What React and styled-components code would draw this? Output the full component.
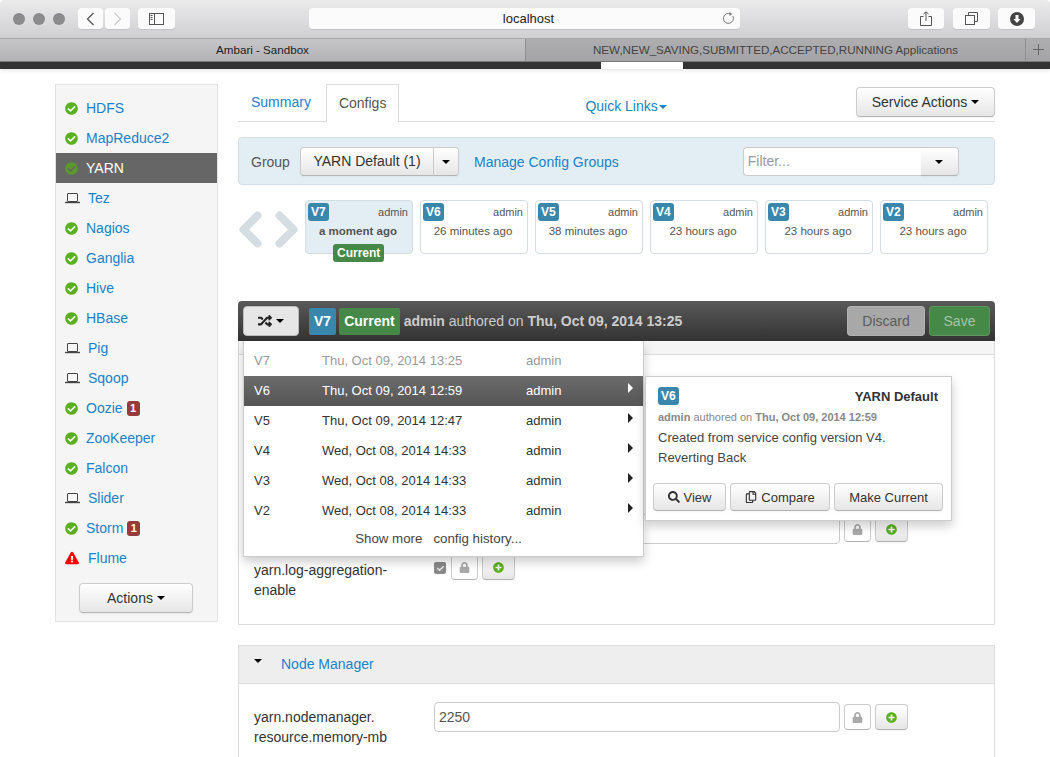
import React from "react";
import styled, { createGlobalStyle, css } from "styled-components";
import {
  FaCheckCircle,
  FaExclamationTriangle,
  FaRandom,
  FaSearch,
  FaRegCopy,
  FaLock,
  FaPlusCircle,
  FaCheck,
} from "react-icons/fa";

const GlobalStyle = createGlobalStyle`
  html, body { margin: 0; padding: 0; background: #fff; }
  body {
    font-family: "Liberation Sans", Arial, sans-serif;
    font-size: 14px;
    color: #333;
  }
  * { box-sizing: border-box; }
`;

const Screen = styled.div`
  width: 1050px;
  height: 757px;
  overflow: hidden;
  background: #fff;
`;

/* ---------- browser chrome ---------- */

const Toolbar = styled.div`
  height: 38px;
  display: flex;
  align-items: center;
  padding: 0 15px 0 13px;
  background: linear-gradient(#ecebec, #cfced0);
  border-radius: 4px 4px 0 0;
`;

const Light = styled.span`
  width: 12px;
  height: 12px;
  margin-right: 8px;
  border-radius: 50%;
  background: #8b8a8d;
`;

const ChromeBtn = styled.div`
  width: ${(p) => p.$w}px;
  height: 22px;
  margin-left: ${(p) => p.$ml || 0}px;
  display: flex;
  align-items: center;
  justify-content: center;
  background: #fbfbfb;
  border-radius: 4px;
  border-bottom: 1px solid #c2c1c3;
`;

const UrlBar = styled.div`
  width: 431px;
  height: 22px;
  margin-left: 134px;
  margin-right: 168px;
  padding-left: 8px;
  position: relative;
  display: flex;
  align-items: center;
  justify-content: center;
  font-size: 13px;
  color: #222;
  background: #fbfbfb;
  border-radius: 4px;
  border-bottom: 1px solid #c2c1c3;
  svg {
    position: absolute;
    right: 5px;
    top: 4px;
  }
`;

const TabStrip = styled.div`
  height: 24px;
  display: flex;
  border-top: 1px solid #a8a7a9;
  border-bottom: 1px solid #7f7e80;
  font-size: 11.6px;
`;

const BrowserTab = styled.div`
  flex: ${(p) => (p.$w ? `0 0 ${p.$w}px` : 1)};
  display: flex;
  align-items: center;
  justify-content: center;
  padding-bottom: 1px;
  color: ${(p) => (p.$active ? "#222" : "#444")};
  background: ${(p) =>
    p.$active
      ? "linear-gradient(#c6c5c7, #b3b2b4)"
      : "linear-gradient(#aeadaf, #a3a2a4)"};
  border-left: ${(p) => (p.$active ? "0" : "1px solid #8f8e90")};
`;

const AppBar = styled.div`
  height: 7px;
  display: flex;
  background: #333;
  box-shadow: 0 1px 4px rgba(0, 0, 0, 0.12);
`;

const AppBarTab = styled.div`
  width: 82px;
  margin-left: 601px;
  background: #fff;
`;

/* ---------- page ---------- */

const Page = styled.div`
  display: flex;
  align-items: flex-start;
  gap: 20px;
  padding: 15px 55px 0;
`;

const Sidebar = styled.nav`
  width: 163px;
  flex: none;
  height: 538px;
  padding-top: 8px;
  display: flex;
  flex-direction: column;
  background: #f5f5f5;
  border: 1px solid #e3e3e3;
`;

const ServiceRow = styled.a`
  height: 30px;
  flex: none;
  display: flex;
  align-items: center;
  padding-left: 9px;
  font-size: 14px;
  color: ${(p) => (p.$active ? "#fff" : "#1a82c8")};
  background: ${(p) => (p.$active ? "#666" : "transparent")};
`;

const StatusIcon = styled.span`
  width: 21px;
  flex: none;
  display: flex;
  align-items: center;
  color: ${(p) => p.$color};
`;

const WideIcon = styled(StatusIcon)`
  width: 23px;
`;

const AlertCount = styled.span`
  margin-left: 4px;
  min-width: 13px;
  height: 15px;
  border-radius: 3px;
  background: #953b39;
  color: #fff;
  font-size: 11px;
  font-weight: bold;
  line-height: 15px;
  text-align: center;
`;

const buttonFace = css`
  background: linear-gradient(#fff, #e6e6e6);
  border: 1px solid #ccc;
  border-bottom-color: #b3b3b3;
  border-radius: 4px;
  box-shadow: inset 0 1px 0 rgba(255, 255, 255, 0.2), 0 1px 2px rgba(0, 0, 0, 0.05);
  color: #333;
`;

const Caret = styled.span`
  display: inline-block;
  margin-left: ${(p) => p.$ml ?? 4}px;
  margin-bottom: ${(p) => p.$mb || 0}px;
  border-top: 4px solid ${(p) => p.$color || "#000"};
  border-left: 4px solid transparent;
  border-right: 4px solid transparent;
  vertical-align: middle;
`;

const ActionsBtn = styled.div`
  ${buttonFace}
  width: 114px;
  height: 30px;
  margin: 10px 0 0 23px;
  display: flex;
  align-items: center;
  justify-content: center;
`;

const Main = styled.main`
  width: 757px;
  flex: none;
`;

const TabsRow = styled.div`
  height: 38px;
  display: flex;
  align-items: flex-start;
  border-bottom: 1px solid #ddd;
`;

const TabLink = styled.a`
  height: ${(p) => (p.$active ? 38 : 37)}px;
  margin-right: ${(p) => (p.$active ? 0 : 2)}px;
  padding: 10px ${(p) => (p.$active ? 12 : 13)}px 0;
  line-height: 17px;
  color: ${(p) => (p.$active ? "#555" : "#1a82c8")};
  background: #fff;
  border: ${(p) => (p.$active ? "1px solid #ddd" : "0")};
  border-bottom: 0;
`;

const QuickLinks = styled.a`
  margin: 14px 0 0 186px;
  color: #1a82c8;
  line-height: 17px;
`;

const ServiceActions = styled.div`
  ${buttonFace}
  width: 139px;
  height: 30px;
  margin: 3px 0 0 auto;
  padding-bottom: 1px;
  display: flex;
  align-items: center;
  justify-content: center;
`;

const GroupBar = styled.div`
  height: 48px;
  margin-top: 15px;
  padding: 9px 0 0 12px;
  display: flex;
  align-items: flex-start;
  background: #e3eef4;
  border: 1px solid #d3e0e7;
  border-radius: 4px;
`;

const GroupLabel = styled.span`
  width: 49px;
  line-height: 30px;
  color: #555;
`;

const Split = styled.div`
  height: 29px;
  display: flex;
  margin-left: ${(p) => p.$ml || 0}px;
`;

const SplitMain = styled.div`
  ${buttonFace}
  width: ${(p) => p.$w}px;
  padding-bottom: 2px;
  display: flex;
  align-items: center;
  justify-content: center;
  border-radius: 4px 0 0 4px;
  border-right: 1px solid #ccc;
`;

const SplitCaret = styled.div`
  ${buttonFace}
  width: ${(p) => p.$w}px;
  display: flex;
  align-items: center;
  justify-content: center;
  border-radius: 0 4px 4px 0;
  border-left: 0;
`;

const FilterBox = styled.div`
  width: 178px;
  padding: 0 0 2px 4px;
  display: flex;
  align-items: center;
  color: #999;
  background: #fff;
  border: 1px solid #ccc;
  border-right: 0;
  border-radius: 4px 0 0 4px;
`;

const ManageLink = styled.a`
  margin-left: 15px;
  line-height: 30px;
  color: #1a82c8;
`;

const VersionStrip = styled.div`
  height: 116px;
  padding-top: 15px;
  display: flex;
  align-items: flex-start;
`;

const Arrows = styled.div`
  width: 67px;
  height: 54px;
  flex: none;
  display: flex;
  align-items: flex-start;
  gap: 13px;
  padding: 11px 0 0 1px;
`;

const Card = styled.div`
  position: relative;
  width: 108px;
  height: 54px;
  flex: none;
  margin-right: 7px;
  padding: 2px 4px 0 2px;
  font-size: 11px;
  color: #555;
  background: ${(p) => (p.$current ? "#e3eef4" : "#fff")};
  border: 1px solid #d3dce0;
  border-radius: 4px;
`;

const CardTop = styled.div`
  display: flex;
  align-items: center;
  justify-content: space-between;
`;

const Badge = styled.span`
  display: inline-block;
  background: ${(p) => p.$bg || "#3a87ad"};
  color: #fff;
  font-weight: bold;
  font-size: 12px;
  line-height: 18px;
  padding: 0 3px;
  border-radius: 3px;
`;

const CardTime = styled.div`
  margin-top: 2px;
  text-align: center;
  font-size: 11.5px;
  line-height: 17px;
  font-weight: ${(p) => (p.$bold ? "bold" : "normal")};
`;

const CurrentTag = styled(Badge)`
  position: absolute;
  left: 27px;
  top: 43px;
  padding: 0 4px;
`;

const VersionBar = styled.div`
  height: 40px;
  padding: 5px;
  display: flex;
  align-items: center;
  color: #ccc;
  background: linear-gradient(#595959, #333);
  border-radius: 4px 4px 0 0;
`;

const SwitchBtn = styled.div`
  width: 56px;
  height: 30px;
  margin-right: 10px;
  display: flex;
  align-items: center;
  justify-content: center;
  color: #222;
  background: #e6e6e6;
  border: 1px solid #bbb;
  border-radius: 4px;
`;

const BarLabel = styled.span`
  height: 27px;
  margin-right: 3px;
  padding: 0 5px;
  display: flex;
  align-items: center;
  color: #fff;
  font-weight: bold;
  font-size: 14px;
  background: ${(p) => p.$bg};
  border-radius: 2px;
`;

const BarText = styled.span`
  margin-left: 1px;
  b {
    font-weight: bold;
  }
`;

const BarBtn = styled.div`
  width: ${(p) => p.$w}px;
  height: 30px;
  margin-left: ${(p) => p.$ml};
  display: flex;
  align-items: center;
  justify-content: center;
  color: ${(p) => p.$color};
  background: ${(p) => p.$bg};
  border: 1px solid rgba(255, 255, 255, 0.12);
  border-radius: 4px;
`;

const Stage = styled.div`
  position: relative;
`;

const Panel = styled.section`
  height: 284px;
  border: 1px solid #ddd;
  border-top: 0;
`;

const PanelTopStrip = styled.div`
  height: 14px;
  background: #f5f5f5;
  border-bottom: 1px solid #ddd;
`;

const PanelBody = styled.div`
  padding: 159px 0 0 15px;
  display: flex;
  flex-direction: column;
`;

const FormRow = styled.div`
  display: flex;
  align-items: flex-start;
  margin-top: ${(p) => p.$mt || 0}px;
`;

const PropName = styled.div`
  width: 180px;
  flex: none;
  padding-top: ${(p) => p.$pt || 0}px;
  line-height: 20px;
  color: #333;
`;

const ValueBox = styled.div`
  width: 406px;
  height: 30px;
  flex: none;
  padding-left: 4px;
  display: flex;
  align-items: center;
  color: #555;
  background: #fff;
  border: 1px solid #ccc;
  border-radius: 4px;
`;

const LockBtn = styled.div`
  width: 27px;
  height: 26px;
  flex: none;
  margin: ${(p) => p.$m || "2px 0 0 4px"};
  display: flex;
  align-items: center;
  justify-content: center;
  color: #aaa;
  background: #fff;
  border: 1px solid #ccc;
  border-bottom-color: #b3b3b3;
  border-radius: 4px;
`;

const PlusBtn = styled.div`
  ${buttonFace}
  width: 33px;
  height: 26px;
  flex: none;
  margin: ${(p) => p.$m || "2px 0 0 4px"};
  display: flex;
  align-items: center;
  justify-content: center;
  color: #5ab01e;
`;

const CheckBox = styled.div`
  width: 12px;
  height: 12px;
  flex: none;
  margin-top: 2px;
  display: flex;
  align-items: center;
  justify-content: center;
  color: #eee;
  background: #8a8a8a;
  border-radius: 2px;
`;

const SectionPanel = styled.section`
  margin-top: 20px;
  border: 1px solid #ddd;
  border-bottom: 0;
`;

const SectionHead = styled.div`
  height: 38px;
  padding: 0 0 2px 15px;
  display: flex;
  align-items: center;
  background: #eee;
  border-bottom: 1px solid #ddd;
  a {
    margin-left: 19px;
    color: #1a82c8;
  }
`;

const SectionBody = styled.div`
  height: 140px;
  padding: 18px 0 0 15px;
`;

const Dropdown = styled.div`
  position: absolute;
  left: 5px;
  top: 0;
  width: 401px;
  height: 216px;
  padding-top: 5px;
  background: #fff;
  border: 1px solid #ccc;
  border-top: 0;
  box-shadow: 0 5px 10px rgba(0, 0, 0, 0.2);
  font-size: 13px;
  z-index: 2;
`;

const HistoryRow = styled.div`
  height: 30px;
  padding: 0 0 2px 10px;
  display: flex;
  align-items: center;
  color: ${(p) => (p.$hover ? "#fff" : p.$muted ? "#999" : "#333")};
  background: ${(p) => (p.$hover ? "linear-gradient(#6c6c6c, #555)" : "transparent")};
`;

const HistVersion = styled.span`
  width: 68px;
`;

const HistDate = styled.span`
  width: 204px;
`;

const HistUser = styled.span`
  width: 102px;
`;

const HistArrow = styled.span`
  width: 0;
  height: 0;
  margin-top: -4px;
  border-left: 5px solid ${(p) => (p.$hover ? "#fff" : "#222")};
  border-top: 5px solid transparent;
  border-bottom: 5px solid transparent;
`;

const HistoryMore = styled.div`
  margin-top: 3px;
  padding-right: 10px;
  text-align: center;
  font-size: 13.3px;
  color: #444;
  line-height: 20px;
  span {
    margin-right: 11px;
  }
`;

const Popover = styled.div`
  position: absolute;
  left: 407px;
  top: 35px;
  width: 307px;
  height: 145px;
  padding: 10px 7px 0;
  background: #fff;
  border: 1px solid #ccc;
  box-shadow: 0 5px 10px rgba(0, 0, 0, 0.2);
  font-size: 13px;
  z-index: 3;
`;

const PopHead = styled.div`
  padding: 0 6px 0 5px;
  display: flex;
  align-items: center;
  justify-content: space-between;
  b {
    color: #333;
  }
`;

const PopMeta = styled.div`
  margin: 2px 0 1px;
  padding-left: 5px;
  font-size: 11px;
  line-height: 20px;
  color: #888;
`;

const PopNote = styled.div`
  padding-left: 5px;
  line-height: 20px;
  color: #444;
`;

const PopActions = styled.div`
  margin-top: 15px;
  display: flex;
  gap: 4px;
`;

const PopBtn = styled.div`
  ${buttonFace}
  width: ${(p) => p.$w}px;
  height: 28px;
  display: flex;
  align-items: center;
  justify-content: center;
  gap: 4px;
`;

const Laptop = () => (
  <svg width="15" height="11" viewBox="0 0 15 11" fill="none" stroke="#444" strokeWidth="1">
    <rect x="2.5" y="0.5" width="10" height="8" rx="0.5" />
    <path d="M0 9.5h15" strokeWidth="1.4" />
  </svg>
);

const Chevron = ({ d }) => (
  <svg width="23" height="37" viewBox="0 0 23 37" fill="none" stroke="#d4dde1" strokeWidth="8" strokeLinecap="round" strokeLinejoin="round">
    <path d={d} />
  </svg>
);

const services = [
  { name: "HDFS", state: "ok" },
  { name: "MapReduce2", state: "ok" },
  { name: "YARN", state: "ok", active: true },
  { name: "Tez", state: "client" },
  { name: "Nagios", state: "ok" },
  { name: "Ganglia", state: "ok" },
  { name: "Hive", state: "ok" },
  { name: "HBase", state: "ok" },
  { name: "Pig", state: "client" },
  { name: "Sqoop", state: "client" },
  { name: "Oozie", state: "ok", alerts: 1 },
  { name: "ZooKeeper", state: "ok" },
  { name: "Falcon", state: "ok" },
  { name: "Slider", state: "client" },
  { name: "Storm", state: "ok", alerts: 1 },
  { name: "Flume", state: "alert" },
];

const versions = [
  { v: "V7", time: "a moment ago", current: true },
  { v: "V6", time: "26 minutes ago" },
  { v: "V5", time: "38 minutes ago" },
  { v: "V4", time: "23 hours ago" },
  { v: "V3", time: "23 hours ago" },
  { v: "V2", time: "23 hours ago" },
];

const history = [
  { v: "V7", date: "Thu, Oct 09, 2014 13:25", muted: true },
  { v: "V6", date: "Thu, Oct 09, 2014 12:59", hover: true },
  { v: "V5", date: "Thu, Oct 09, 2014 12:47" },
  { v: "V4", date: "Wed, Oct 08, 2014 14:33" },
  { v: "V3", date: "Wed, Oct 08, 2014 14:33" },
  { v: "V2", date: "Wed, Oct 08, 2014 14:33" },
];

const ServiceIcon = ({ state, active }) => {
  if (state === "client")
    return (
      <WideIcon>
        <Laptop />
      </WideIcon>
    );
  if (state === "alert")
    return (
      <WideIcon $color="#f00">
        <FaExclamationTriangle size={14} />
      </WideIcon>
    );
  return (
    <StatusIcon $color={active ? "#5a9a2a" : "#5ab01e"}>
      <FaCheckCircle size={13} />
    </StatusIcon>
  );
};

const App = () => (
  <Screen>
    <GlobalStyle />
    <Toolbar>
      <Light />
      <Light />
      <Light />
      <ChromeBtn $w={25} $ml={5}>
        <svg width="9" height="14" viewBox="0 0 9 14" fill="none" stroke="#555" strokeWidth="1.3">
          <path d="M7.5 1L1.5 7l6 6" />
        </svg>
      </ChromeBtn>
      <ChromeBtn $w={25} $ml={2}>
        <svg width="9" height="14" viewBox="0 0 9 14" fill="none" stroke="#ccc" strokeWidth="1.3">
          <path d="M1.5 1l6 6-6 6" />
        </svg>
      </ChromeBtn>
      <ChromeBtn $w={37} $ml={8}>
        <svg width="15" height="12" viewBox="0 0 15 12" fill="none" stroke="#555">
          <rect x="0.5" y="0.5" width="14" height="11" />
          <path d="M5.5 0.5v11M1.5 2.5h2M1.5 4.5h2M1.5 6.5h2" />
        </svg>
      </ChromeBtn>
      <UrlBar>
        localhost
        <svg width="13" height="13" viewBox="0 0 13 13" fill="none" stroke="#777">
          <path d="M10.8 4a5 5 0 1 1-2-2" />
          <path d="M7.5 0l2.8 2-2.8 2z" fill="#777" stroke="none" />
        </svg>
      </UrlBar>
      <ChromeBtn $w={36}>
        <svg width="12" height="15" viewBox="0 0 12 15" fill="none" stroke="#555">
          <path d="M3.5 5.5h-3v9h11v-9h-3M6 10V1M3.5 3L6 .8 8.5 3" />
        </svg>
      </ChromeBtn>
      <ChromeBtn $w={37} $ml={9}>
        <svg width="13" height="13" viewBox="0 0 13 13" fill="none" stroke="#555">
          <rect x="0.5" y="3.5" width="9" height="9" />
          <path d="M3.5 3.5v-3h9v9h-3" />
        </svg>
      </ChromeBtn>
      <ChromeBtn $w={37} $ml={8}>
        <svg width="14" height="14" viewBox="0 0 14 14">
          <circle cx="7" cy="7" r="7" fill="#444" />
          <path d="M5.5 3h3v4h2L7 11 3.5 7h2z" fill="#fff" />
        </svg>
      </ChromeBtn>
    </Toolbar>
    <TabStrip>
      <BrowserTab $active $w={525}>Ambari - Sandbox</BrowserTab>
      <BrowserTab>NEW,NEW_SAVING,SUBMITTED,ACCEPTED,RUNNING Applications</BrowserTab>
      <BrowserTab $w={25}>
        <svg width="11" height="11" viewBox="0 0 11 11" stroke="#666">
          <path d="M5.5 0v11M0 5.5h11" />
        </svg>
      </BrowserTab>
    </TabStrip>
    <AppBar>
      <AppBarTab />
    </AppBar>

    <Page>
      <Sidebar>
        {services.map((s) => (
          <ServiceRow key={s.name} $active={s.active}>
            <ServiceIcon state={s.state} active={s.active} />
            {s.name}
            {s.alerts && <AlertCount>{s.alerts}</AlertCount>}
          </ServiceRow>
        ))}
        <ActionsBtn>
          Actions
          <Caret />
        </ActionsBtn>
      </Sidebar>

      <Main>
        <TabsRow>
          <TabLink>Summary</TabLink>
          <TabLink $active>Configs</TabLink>
          <QuickLinks>
            Quick Links
            <Caret $ml={1} $color="#1a82c8" />
          </QuickLinks>
          <ServiceActions>
            Service Actions
            <Caret />
          </ServiceActions>
        </TabsRow>

        <GroupBar>
          <GroupLabel>Group</GroupLabel>
          <Split>
            <SplitMain $w={134}>YARN Default (1)</SplitMain>
            <SplitCaret $w={25}>
              <Caret $ml={0} />
            </SplitCaret>
          </Split>
          <ManageLink>Manage Config Groups</ManageLink>
          <Split $ml={124}>
            <FilterBox>Filter...</FilterBox>
            <SplitCaret $w={38}>
              <Caret $ml={0} />
            </SplitCaret>
          </Split>
        </GroupBar>

        <VersionStrip>
          <Arrows>
            <Chevron d="M18.5 4.5L4.5 18.5l14 14" />
            <Chevron d="M4.5 4.5l14 14-14 14" />
          </Arrows>
          {versions.map((c) => (
            <Card key={c.v} $current={c.current}>
              <CardTop>
                <Badge>{c.v}</Badge>
                admin
              </CardTop>
              <CardTime $bold={c.current}>{c.time}</CardTime>
              {c.current && <CurrentTag $bg="#468847">Current</CurrentTag>}
            </Card>
          ))}
        </VersionStrip>

        <VersionBar>
          <SwitchBtn>
            <FaRandom size={14} />
            <Caret />
          </SwitchBtn>
          <BarLabel $bg="#3a87ad">V7</BarLabel>
          <BarLabel $bg="#468847">Current</BarLabel>
          <BarText>
            <b>admin</b> authored on <b>Thu, Oct 09, 2014 13:25</b>
          </BarText>
          <BarBtn $w={78} $ml="auto" $bg="#a8a8a8" $color="#5c5c5c">Discard</BarBtn>
          <BarBtn $w={61} $ml="4px" $bg="#468847" $color="#a6c4a9">Save</BarBtn>
        </VersionBar>

        <Stage>
          <Panel>
            <PanelTopStrip />
            <PanelBody>
              <FormRow>
                <PropName />
                <ValueBox />
                <LockBtn>
                  <FaLock size={11} />
                </LockBtn>
                <PlusBtn>
                  <FaPlusCircle size={11} />
                </PlusBtn>
              </FormRow>
              <FormRow $mt={16}>
                <PropName>
                  yarn.log-aggregation-
                  <br />
                  enable
                </PropName>
                <CheckBox>
                  <FaCheck size={7} />
                </CheckBox>
                <LockBtn $m="-6px 0 0 5px">
                  <FaLock size={11} />
                </LockBtn>
                <PlusBtn $m="-6px 0 0 4px">
                  <FaPlusCircle size={11} />
                </PlusBtn>
              </FormRow>
            </PanelBody>
          </Panel>

          <Dropdown>
            {history.map((h) => (
              <HistoryRow key={h.v} $hover={h.hover} $muted={h.muted}>
                <HistVersion>{h.v}</HistVersion>
                <HistDate>{h.date}</HistDate>
                <HistUser>admin</HistUser>
                {!h.muted && <HistArrow $hover={h.hover} />}
              </HistoryRow>
            ))}
            <HistoryMore>
              <span>Show more</span>config history...
            </HistoryMore>
          </Dropdown>

          <Popover>
            <PopHead>
              <Badge>V6</Badge>
              <b>YARN Default</b>
            </PopHead>
            <PopMeta>
              <b>admin</b> authored on <b>Thu, Oct 09, 2014 12:59</b>
            </PopMeta>
            <PopNote>Created from service config version V4.</PopNote>
            <PopNote>Reverting Back</PopNote>
            <PopActions>
              <PopBtn $w={73}>
                <FaSearch size={12} />
                View
              </PopBtn>
              <PopBtn $w={100}>
                <FaRegCopy size={12} />
                Compare
              </PopBtn>
              <PopBtn $w={109}>Make Current</PopBtn>
            </PopActions>
          </Popover>
        </Stage>

        <SectionPanel>
          <SectionHead>
            <Caret $ml={0} $mb={6} />
            <a>Node Manager</a>
          </SectionHead>
          <SectionBody>
            <FormRow>
              <PropName $pt={5}>
                yarn.nodemanager.
                <br />
                resource.memory-mb
              </PropName>
              <ValueBox>2250</ValueBox>
              <LockBtn>
                <FaLock size={11} />
              </LockBtn>
              <PlusBtn>
                <FaPlusCircle size={11} />
              </PlusBtn>
            </FormRow>
          </SectionBody>
        </SectionPanel>
      </Main>
    </Page>
  </Screen>
);

export default App;
